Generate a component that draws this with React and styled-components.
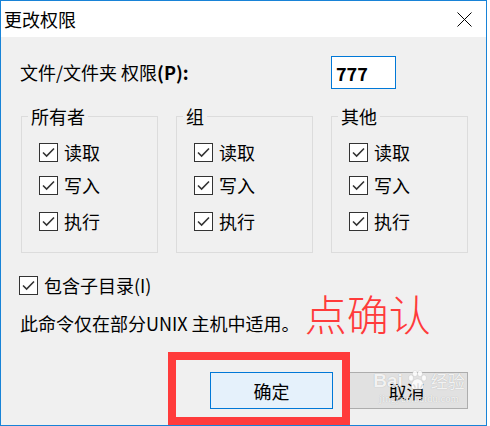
import React from "react";
import styled, { createGlobalStyle } from "styled-components";

const GlobalStyle = createGlobalStyle`
  html, body { margin: 0; padding: 0; background: #ffffff; }
  body { font-family: "Noto Sans CJK SC", "Noto Sans", sans-serif; color: #000; }
  * { box-sizing: border-box; }
`;

const Window = styled.div`
  position: relative;
  width: 487px;
  height: 426px;
  border: 1px solid #1883d7;
  background: #f0f0f0;
  display: flex;
  flex-direction: column;
`;

const TitleBar = styled.div`
  height: 36px;
  flex: 0 0 36px;
  background: #ffffff;
  display: flex;
  align-items: center;
  justify-content: space-between;
  padding: 0 14px 0 3px;
  font-size: 18px;
  line-height: 24px;
`;

const Body = styled.div`
  flex: 1;
  display: flex;
  flex-direction: column;
  padding: 19px 18px 16px 20px;
`;

const Grid3 = styled.div`
  display: grid;
  grid-template-columns: repeat(3, 137px);
  column-gap: 18px;
  margin-top: ${(p) => p.$top || 0}px;
`;

const FieldLabel = styled.div`
  grid-column: span 2;
  align-self: center;
  margin-left: -1px;
  font-size: 18px;
  line-height: 25px;
`;

const Strong = styled.span`
  font-weight: 700;
`;

const PermInput = styled.input`
  width: 65px;
  height: 33px;
  border: 1px solid #0078d7;
  background: #ffffff;
  padding: 0 0 0 4px;
  font-family: "Noto Sans CJK SC", sans-serif;
  font-size: 18px;
  font-weight: 700;
  color: #000;
  outline: none;
`;

const Group = styled.fieldset`
  margin: 0;
  padding: 0;
  min-width: 0;
  border: 1px solid #dcdcdc;
`;

const Legend = styled.legend`
  margin-left: 6px;
  padding: 0 3px;
  font-size: 18px;
  line-height: 24px;
`;

const Rows = styled.div`
  display: flex;
  flex-direction: column;
  padding: 12px 0 18px 17px;
`;

const Row = styled.div`
  display: flex;
  align-items: center;
  gap: 6px;
  height: 25px;
  margin-top: ${(p) => p.$top || 0}px;
  margin-left: ${(p) => p.$left || 0}px;
  font-size: 18px;
  line-height: 25px;
`;

const Box = styled.span`
  width: 19px;
  height: 19px;
  flex: 0 0 19px;
  border: 1px solid #333333;
  background: #ffffff;
  display: flex;
  align-items: center;
  justify-content: center;
`;

const NoteRow = styled.div`
  display: flex;
  align-items: baseline;
  margin-left: -1px;
`;

const Note = styled.span`
  font-size: 18px;
  line-height: 25px;
`;

const RedNote = styled.span`
  margin-left: 5px;
  font-size: 42px;
  line-height: 30px;
  font-weight: 300;
  color: #ff3b3b;
`;

const Footer = styled.div`
  margin-top: auto;
  display: flex;
  justify-content: flex-end;
  gap: 12px;
`;

const Button = styled.div`
  width: 123px;
  height: 37px;
  display: flex;
  align-items: center;
  justify-content: center;
  font-size: 18px;
  border: 1px solid ${(p) => (p.$primary ? "#0078d7" : "#adadad")};
  background: ${(p) => (p.$primary ? "#e5f1fb" : "#e1e1e1")};
`;

const Highlight = styled.div`
  position: absolute;
  left: 167px;
  top: 351px;
  width: 182px;
  height: 73px;
  border: 8px solid #ff3b3b;
  pointer-events: none;
`;

const Watermark = styled.div`
  position: absolute;
  left: 372px;
  top: 368px;
  width: 92px;
  display: flex;
  flex-direction: column;
  align-items: center;
  color: rgba(255, 255, 255, 0.85);
  text-shadow: 0 0 1px rgba(0, 0, 0, 0.25);
  pointer-events: none;
`;

const MarkTop = styled.div`
  display: flex;
  align-items: center;
  gap: 2px;
  font-family: "Liberation Sans", sans-serif;
  font-weight: 700;
  font-size: 19px;
  line-height: 24px;
`;

const MarkCn = styled.span`
  font-family: "Noto Sans CJK SC", sans-serif;
  font-weight: 400;
  font-size: 17px;
`;

const MarkUrl = styled.div`
  font-family: "Liberation Serif", serif;
  font-size: 10px;
  line-height: 11px;
  letter-spacing: 0.3px;
`;

const Check = () => (
  <Box>
    <svg width="13" height="11" viewBox="0 0 13 11">
      <polyline points="1,5.5 4.6,9 12,1.5" fill="none" stroke="#333" strokeWidth="1.6" />
    </svg>
  </Box>
);

const CheckRow = ({ label, top, left }) => (
  <Row $top={top} $left={left}>
    <Check />
    <span>{label}</span>
  </Row>
);

const PermGroup = ({ title }) => (
  <Group>
    <Legend>{title}</Legend>
    <Rows>
      <CheckRow label="读取" />
      <CheckRow label="写入" top={8} />
      <CheckRow label="执行" top={11} />
    </Rows>
  </Group>
);

const CloseIcon = () => (
  <svg width="15" height="15" viewBox="0 0 15 15">
    <path d="M0.5 0.5 L14.5 14.5 M14.5 0.5 L0.5 14.5" stroke="#000" strokeWidth="1" />
  </svg>
);

const Paw = () => (
  <svg width="24" height="24" viewBox="0 0 24 24">
    <g fill="rgba(255,255,255,0.85)" stroke="rgba(0,0,0,0.12)" strokeWidth="0.6">
      <ellipse cx="6" cy="9" rx="2.4" ry="3" />
      <ellipse cx="10" cy="4.5" rx="2.4" ry="3" />
      <ellipse cx="15" cy="4.5" rx="2.4" ry="3" />
      <ellipse cx="19" cy="9" rx="2.4" ry="3" />
      <path d="M12.5 10 C8 10 6 15 6.5 18 C7 21 10 20.5 12.5 20.5 C15 20.5 18 21 18.5 18 C19 15 17 10 12.5 10 Z" />
    </g>
  </svg>
);

export default function App() {
  return (
    <>
      <GlobalStyle />
      <Window>
        <TitleBar>
          <span>更改权限</span>
          <CloseIcon />
        </TitleBar>
        <Body>
          <Grid3>
            <FieldLabel>
              文件/文件夹 权限<Strong>(P):</Strong>
            </FieldLabel>
            <PermInput defaultValue="777" readOnly />
          </Grid3>
          <Grid3 $top={15}>
            <PermGroup title="所有者" />
            <PermGroup title="组" />
            <PermGroup title="其他" />
          </Grid3>
          <CheckRow label="包含子目录(I)" top={20} left={-2} />
          <NoteRow>
            <Note>此命令仅在部分UNIX 主机中适用。</Note>
            <RedNote>点确认</RedNote>
          </NoteRow>
          <Footer>
            <Button $primary>确定</Button>
            <Button>取消</Button>
          </Footer>
        </Body>
        <Highlight />
        <Watermark>
          <MarkTop>
            <span>Bai</span>
            <Paw />
            <MarkCn>经验</MarkCn>
          </MarkTop>
          <MarkUrl>jingyan.baidu.com</MarkUrl>
        </Watermark>
      </Window>
    </>
  );
}
